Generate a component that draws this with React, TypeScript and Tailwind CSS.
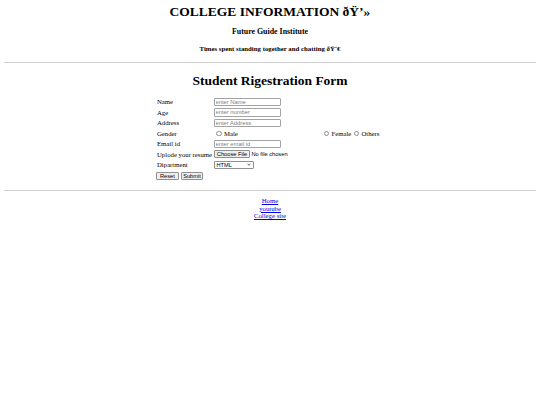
import React from "react";

const sans = "font-['Liberation_Sans',Arial,sans-serif]";

function Row({
  label,
  children,
  third,
}: {
  label?: React.ReactNode;
  children?: React.ReactNode;
  third?: React.ReactNode;
}) {
  return (
    <div className="flex h-[10.5px] items-center">
      <div className="w-[57px] pl-[1px] whitespace-nowrap text-[6.75px] leading-[7.76px]">{label}</div>
      <div className="flex w-[109px] items-center whitespace-nowrap">{children}</div>
      <div className="flex w-[62px] items-center whitespace-nowrap">{third}</div>
    </div>
  );
}

function TextInput({ placeholder }: { placeholder: string }) {
  return (
    <input
      type="text"
      placeholder={placeholder}
      className={`ml-[0.5px] h-[8.8px] w-[67.5px] rounded-[1px] border border-[#a3a3a3] bg-white px-[1px] text-[5.8px] leading-[6px] outline-none placeholder:text-[#808080] ${sans}`}
    />
  );
}

function Radio({ name }: { name: string }) {
  return (
    <input
      type="radio"
      name={name}
      className="h-[5.5px] w-[5.5px] shrink-0 appearance-none rounded-full border border-[#8f8f8f] bg-white"
    />
  );
}

export default function App() {
  return (
    <div className="min-h-[405px] w-[540px] bg-white px-[4px] text-black font-['Liberation_Serif','Times_New_Roman',serif]">
      <h1 className="pt-[4px] text-center text-[13.5px] leading-[15px] font-bold">
        COLLEGE INFORMATION ðŸ’»
      </h1>
      <h3 className="mt-[8px] text-center text-[7.9px] leading-[9px] font-bold">Future Guide Institute</h3>
      <h5 className="mt-[9.2px] text-center text-[6.8px] leading-[7.6px] font-bold">
        Times spent standing together and chatting ðŸ˜€
      </h5>
      <div className="mt-[9.6px] h-[1px] bg-[#cfcfcf]" />
      <h1 className="mt-[9.3px] text-center text-[13.5px] leading-[15px] font-bold">Student Rigestration Form</h1>

      <form className="mx-auto mt-[9px] flex w-[228px] flex-col">
        <Row label="Name">
          <TextInput placeholder="enter Name" />
        </Row>
        <Row label="Age">
          <TextInput placeholder="enter number" />
        </Row>
        <Row label="Address">
          <TextInput placeholder="enter Address" />
        </Row>
        <Row
          label="Gender"
          third={
            <div className="ml-[1.5px] flex items-center text-[6.75px] leading-[7.76px]">
              <Radio name="g" />
              <span className="ml-[2.5px]">Female</span>
              <span className="ml-[2.5px] flex items-center">
                <Radio name="g" />
              </span>
              <span className="ml-[2px]">Others</span>
            </div>
          }
        >
          <div className="ml-[3px] flex items-center text-[6.75px] leading-[7.76px]">
            <Radio name="g" />
            <span className="ml-[2.5px]">Male</span>
          </div>
        </Row>
        <Row label="Email id">
          <TextInput placeholder="enter email id" />
        </Row>
        <Row label="Uplode your resume">
          <div className={`ml-[1px] flex items-center text-[5.7px] ${sans}`}>
            <span className="flex h-[8px] w-[36px] items-center justify-center rounded-[1px] border border-[#8f8f8f] bg-[#efefef] leading-[6px]">
              Choose File
            </span>
            <span className="ml-[1.5px] leading-[6px]">No file chosen</span>
          </div>
        </Row>
        <Row label="Dipartment">
          <div className={`ml-[1px] flex h-[8px] w-[40px] items-center justify-between rounded-[1px] border border-[#8f8f8f] bg-white pl-[1.5px] pr-[2.5px] text-[5.7px] leading-[6px] ${sans}`}>
            <span>HTML</span>
            <svg width="4" height="3" viewBox="0 0 8 5" className="shrink-0">
              <path d="M1 1l3 3 3-3" fill="none" stroke="#222" strokeWidth="1.4" />
            </svg>
          </div>
        </Row>
        <div className="flex h-[10.5px] items-center gap-[2px] pt-[1px]">
          <button
            type="reset"
            className={`flex h-[8px] w-[22.7px] items-center justify-center rounded-[1px] border border-[#8f8f8f] bg-[#efefef] text-[5.7px] leading-[6px] ${sans}`}
          >
            Reset
          </button>
          <button
            type="button"
            className={`flex h-[8px] w-[22.6px] items-center justify-center rounded-[1px] border border-[#8f8f8f] bg-[#efefef] text-[5.7px] leading-[6px] ${sans}`}
          >
            Submit
          </button>
        </div>
      </form>

      <div className="mt-[9.5px] h-[1px] bg-[#cfcfcf]" />
      <nav className="mt-[5.8px] flex flex-col items-center text-[6.75px] leading-[7.7px]">
        <a href="#" className="text-[#0000ee] underline">Home</a>
        <a href="#" className="text-[#0000ee] underline">youtube</a>
        <a href="#" className="text-[#0000ee] underline">College site</a>
      </nav>
    </div>
  );
}
